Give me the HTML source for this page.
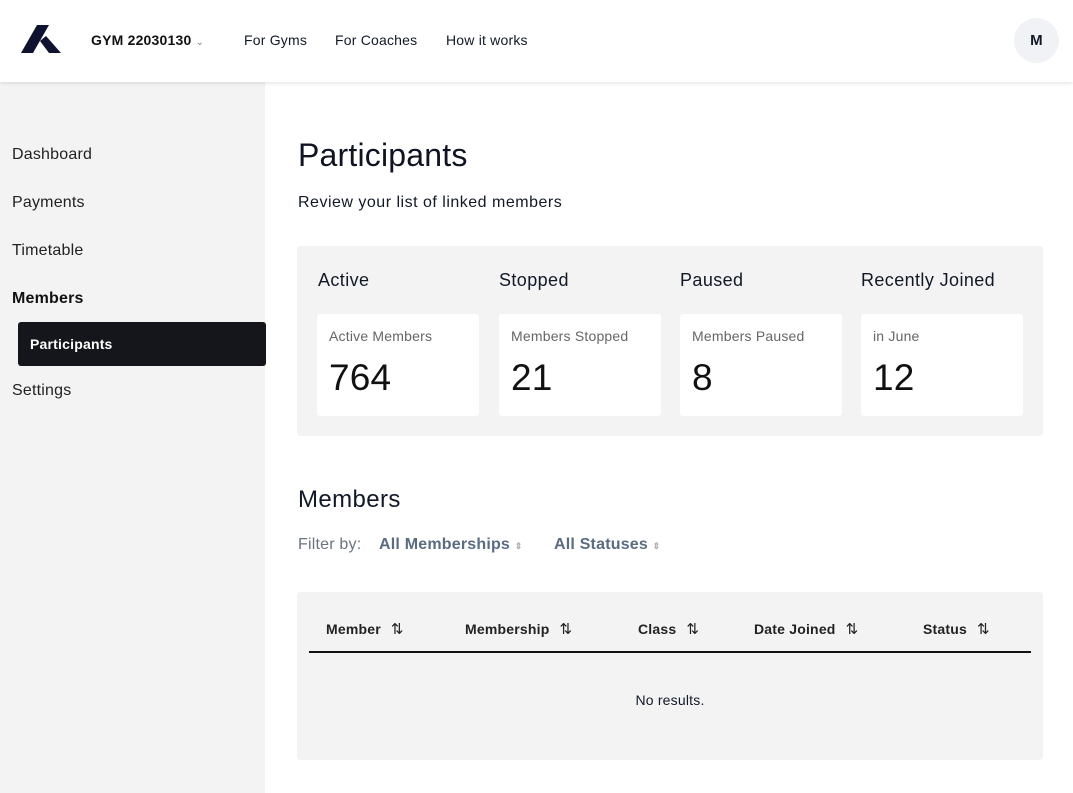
<!DOCTYPE html>
<html><head><meta charset="utf-8"><style>
*{margin:0;padding:0;box-sizing:border-box}
body{width:1073px;height:793px;overflow:hidden;font-family:"Liberation Sans",sans-serif;color:#111827;background:#fff;position:relative;letter-spacing:0.2px}
.hdr{position:absolute;left:0;top:0;width:1073px;height:82px;background:#fff;box-shadow:0 1px 4px rgba(0,0,0,.12);z-index:2}
.hdr span{position:absolute;top:32px;font-size:14px;color:#111827}
.av{position:absolute;left:1014px;top:18px;width:45px;height:45px;border-radius:50%;background:#f1f2f5;font-weight:bold;font-size:15px;text-align:center;line-height:45px}
.side{position:absolute;left:0;top:82px;width:265px;height:711px;background:#f3f3f3}
.side div{position:absolute;left:12px;font-size:16px;color:#222}
.sel{position:absolute;left:18px;top:322px;width:248px;height:44px;background:#14161c;border-radius:3px;color:#fff;font-size:14px;font-weight:bold;padding:14px 12px;z-index:1}
h1{position:absolute;left:298px;top:137px;font-size:32px;font-weight:normal;color:#0f1322}
.sub{position:absolute;left:298px;top:194px;font-size:16px;letter-spacing:0.5px}
.stats{position:absolute;left:297px;top:246px;width:746px;height:190px;background:#f3f3f3;border-radius:3px}
.st{position:absolute;top:24px;font-size:18px;letter-spacing:0.4px}
.card{position:absolute;top:68px;width:162px;height:102px;background:#fff;border-radius:3px}
.card .l{position:absolute;left:12px;top:14px;font-size:14px;color:#666}
.card .n{position:absolute;left:12px;top:43px;font-size:37px;color:#111}
h2{position:absolute;left:298px;top:486px;font-size:24px;font-weight:normal;letter-spacing:0.4px}
.fl{position:absolute;top:536px;font-size:16px;color:#6b7280}
.fb{color:#5b6b82;font-weight:bold}
.tbl{position:absolute;left:297px;top:592px;width:746px;height:168px;background:#f3f3f3;border-radius:3px}
.th{position:absolute;top:28px;font-size:14px;font-weight:bold;color:#222}
.th i{font-style:normal;font-weight:normal;margin-left:10px;font-size:15px}
.line{position:absolute;left:12px;top:59px;width:722px;height:1.5px;background:#111}
.nr{position:absolute;top:100px;width:746px;text-align:center;font-size:14px}
</style></head><body>
<div class="hdr">
<svg style="position:absolute;left:20px;top:24px" width="42" height="30" viewBox="20 24 42 30"><polygon points="21,53 33,53 49,25 37,25" fill="#0f1330"/><polygon points="40,41 46,36 61,53 49,53" fill="#0f1330"/></svg>
<span style="left:91px;font-weight:bold;color:#111">GYM 22030130 <small style="font-size:10px;color:#888;font-weight:normal">&#8964;</small></span>
<span style="left:244px">For Gyms</span>
<span style="left:335px">For Coaches</span>
<span style="left:446px">How it works</span>
<div class="av">M</div>
</div>
<div class="side">
<div style="top:64px">Dashboard</div>
<div style="top:112px">Payments</div>
<div style="top:160px">Timetable</div>
<div style="top:208px;font-weight:bold;color:#111">Members</div>
<div style="top:300px">Settings</div>
</div>
<div class="sel">Participants</div>
<h1>Participants</h1>
<div class="sub">Review your list of linked members</div>
<div class="stats">
<div class="st" style="left:21px">Active</div>
<div class="st" style="left:202px">Stopped</div>
<div class="st" style="left:383px">Paused</div>
<div class="st" style="left:564px">Recently Joined</div>
<div class="card" style="left:20px"><div class="l">Active Members</div><div class="n">764</div></div>
<div class="card" style="left:202px"><div class="l">Members Stopped</div><div class="n">21</div></div>
<div class="card" style="left:383px"><div class="l">Members Paused</div><div class="n">8</div></div>
<div class="card" style="left:564px"><div class="l">in June</div><div class="n">12</div></div>
</div>
<h2>Members</h2>
<div class="fl" style="left:298px">Filter by:</div>
<div class="fl fb" style="left:379px">All Memberships <small style="font-size:9px;color:#aaa">&#8661;</small></div>
<div class="fl fb" style="left:554px">All Statuses <small style="font-size:9px;color:#aaa">&#8661;</small></div>
<div class="tbl">
<div class="th" style="left:29px">Member<i>⇅</i></div>
<div class="th" style="left:168px">Membership<i>⇅</i></div>
<div class="th" style="left:341px">Class<i>⇅</i></div>
<div class="th" style="left:457px">Date Joined<i>⇅</i></div>
<div class="th" style="left:626px">Status<i>⇅</i></div>
<div class="line"></div>
<div class="nr">No results.</div>
</div>
</body></html>
